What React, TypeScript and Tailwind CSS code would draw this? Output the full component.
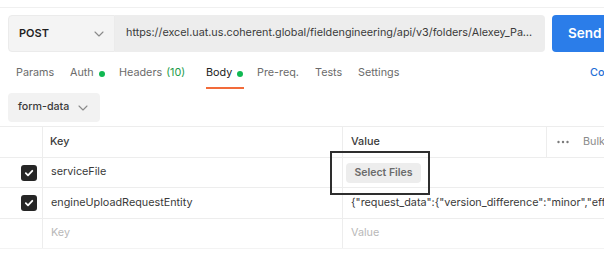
import React from "react";

const Check = () => (
  <div className="w-[16px] h-[16px] rounded-[3px] bg-[#262626] flex items-center justify-center">
    <svg width="10" height="10" viewBox="0 0 10 10" fill="none">
      <path d="M1.8 5.2 L4 7.3 L8.3 2.8" stroke="white" strokeWidth="1.8" strokeLinecap="round" strokeLinejoin="round" />
    </svg>
  </div>
);

const Chevron = ({ className }: { className?: string }) => (
  <svg className={className} width="10" height="6" viewBox="0 0 10 6" fill="none">
    <path d="M1 1 L5 5 L9 1" stroke="#8a8a8a" strokeWidth="1.1" strokeLinecap="round" strokeLinejoin="round" />
  </svg>
);

const Dot = () => <span className="inline-block w-[6px] h-[6px] rounded-full bg-[#10b852] ml-[5px]" />;

export default function App() {
  return (
    <div
      className="w-[604px] h-[256px] overflow-hidden bg-white text-[11px] text-[#212121] relative"
      style={{ fontFamily: "Inter, 'Noto Sans', sans-serif" }}
    >
      <div className="h-[8px] border-b border-[#f0f0f0]" />
      {/* request bar */}
      <div className="flex pl-[8px] mt-[7px] h-[37px]">
        <div className="w-[107px] shrink-0 flex items-center justify-between pl-[10px] pr-[10px] bg-[#f4f4f4] rounded-l-[4px] border border-[#ebebeb]">
          <span className="font-semibold text-[11px] text-[#1f1f1f]">POST</span>
          <Chevron />
        </div>
        <div className="w-[430px] shrink-0 flex items-center pl-[11px] pr-[10px] bg-[#ededed] rounded-r-[4px]">
          <span className="truncate text-[10.8px] text-[#3b3b3b]">
            https://excel.uat.us.coherent.global/fieldengineering/api/v3/folders/Alexey_Pavlov/services/upload
          </span>
        </div>
        <div className="ml-[7px] w-[80px] shrink-0 bg-[#2b7de9] rounded-[4px] flex items-center pl-[16px]">
          <span className="text-white font-semibold text-[13.5px]">Send</span>
        </div>
      </div>
      {/* tabs */}
      <div className="flex mt-[8px] h-[29px] text-[10.8px] text-[#6b6b6b]">
        <div className="w-[70px] pl-[16px] shrink-0 flex items-center pb-[2px]">Params</div>
        <div className="w-[49px] shrink-0 flex items-center pb-[2px]">Auth<Dot /></div>
        <div className="w-[87px] shrink-0 flex items-center pb-[2px]">
          Headers<span className="text-[#1d9b4a] ml-[4px]">(10)</span>
        </div>
        <div className="w-[51px] shrink-0 flex">
          <div className="flex items-center border-b-2 border-[#f26b3a] text-[#212121] pr-[1px]">
            Body<Dot />
          </div>
        </div>
        <div className="w-[58px] shrink-0 flex items-center pb-[2px]">Pre-req.</div>
        <div className="w-[43px] shrink-0 flex items-center pb-[2px]">Tests</div>
        <div className="w-[60px] shrink-0 flex items-center pb-[2px]">Settings</div>
        <div className="ml-[172px] shrink-0 flex items-center pb-[2px] text-[#1f6fd6] font-medium">Cookies</div>
      </div>
      {/* body mode */}
      <div className="mt-[4px] ml-[8px] w-[92px] h-[29px] bg-[#f2f2f2] rounded-[4px] flex items-center justify-between pl-[10px] pr-[12px]">
        <span className="text-[10.7px] font-medium text-[#3a3a3a]">form-data</span>
        <Chevron />
      </div>
      {/* table */}
      <div className="mt-[4px] border-t border-[#ededed]">
        <div className="flex h-[31px] border-b border-[#ededed] text-[10.8px] text-[#3a3a3a] font-medium">
          <div className="w-[43px] shrink-0 border-r border-[#ededed]" />
          <div className="w-[300px] shrink-0 border-r border-[#ededed] flex items-center pl-[7px]">Key</div>
          <div className="w-[204px] shrink-0 border-r border-[#ededed] flex items-center pl-[8px]">Value</div>
          <div className="flex items-center pl-[10px] text-[#8a8a8a] font-normal whitespace-nowrap">
            <svg width="12" height="4" viewBox="0 0 12 4">
              <circle cx="1.5" cy="2" r="1.2" fill="#7a7a7a" />
              <circle cx="6" cy="2" r="1.2" fill="#7a7a7a" />
              <circle cx="10.5" cy="2" r="1.2" fill="#7a7a7a" />
            </svg>
            <span className="ml-[14px]">Bulk Edit</span>
          </div>
        </div>
        <div className="flex h-[30px] border-b border-[#ededed] text-[10.8px] text-[#3a3a3a]">
          <div className="w-[43px] shrink-0 border-r border-[#ededed] flex items-center justify-end pr-[5px]">
            <Check />
          </div>
          <div className="w-[300px] shrink-0 border-r border-[#ededed] flex items-center pl-[8px]">serviceFile</div>
          <div className="flex items-center pl-[3px]">
            <div className="w-[75px] h-[20px] rounded-[4px] bg-[#ededed] flex items-center justify-center text-[10.5px] font-semibold text-[#6b6b6b]">
              Select Files
            </div>
          </div>
        </div>
        <div className="flex h-[31px] border-b border-[#ededed] text-[10.8px] text-[#3a3a3a]">
          <div className="w-[43px] shrink-0 border-r border-[#ededed] flex items-center justify-end pr-[5px]">
            <Check />
          </div>
          <div className="w-[300px] shrink-0 border-r border-[#ededed] flex items-center pl-[8px]">engineUploadRequestEntity</div>
          <div className="flex items-center pl-[8px] whitespace-nowrap">
            {'{"request_data":{"version_difference":"minor","effective_start_date":"2023-01-01"}}'}
          </div>
        </div>
        <div className="flex h-[30px] border-b border-[#f3f3f3] text-[10.8px] text-[#b8b8b8]">
          <div className="w-[43px] shrink-0 border-r border-[#ededed]" />
          <div className="w-[300px] shrink-0 border-r border-[#ededed] flex items-center pl-[8px]">Key</div>
          <div className="flex items-center pl-[8px]">Value</div>
        </div>
      </div>
      {/* annotation box */}
      <div className="absolute left-[330px] top-[151px] w-[100px] h-[44px] border-2 border-[#2e2e2e]" />
    </div>
  );
}
